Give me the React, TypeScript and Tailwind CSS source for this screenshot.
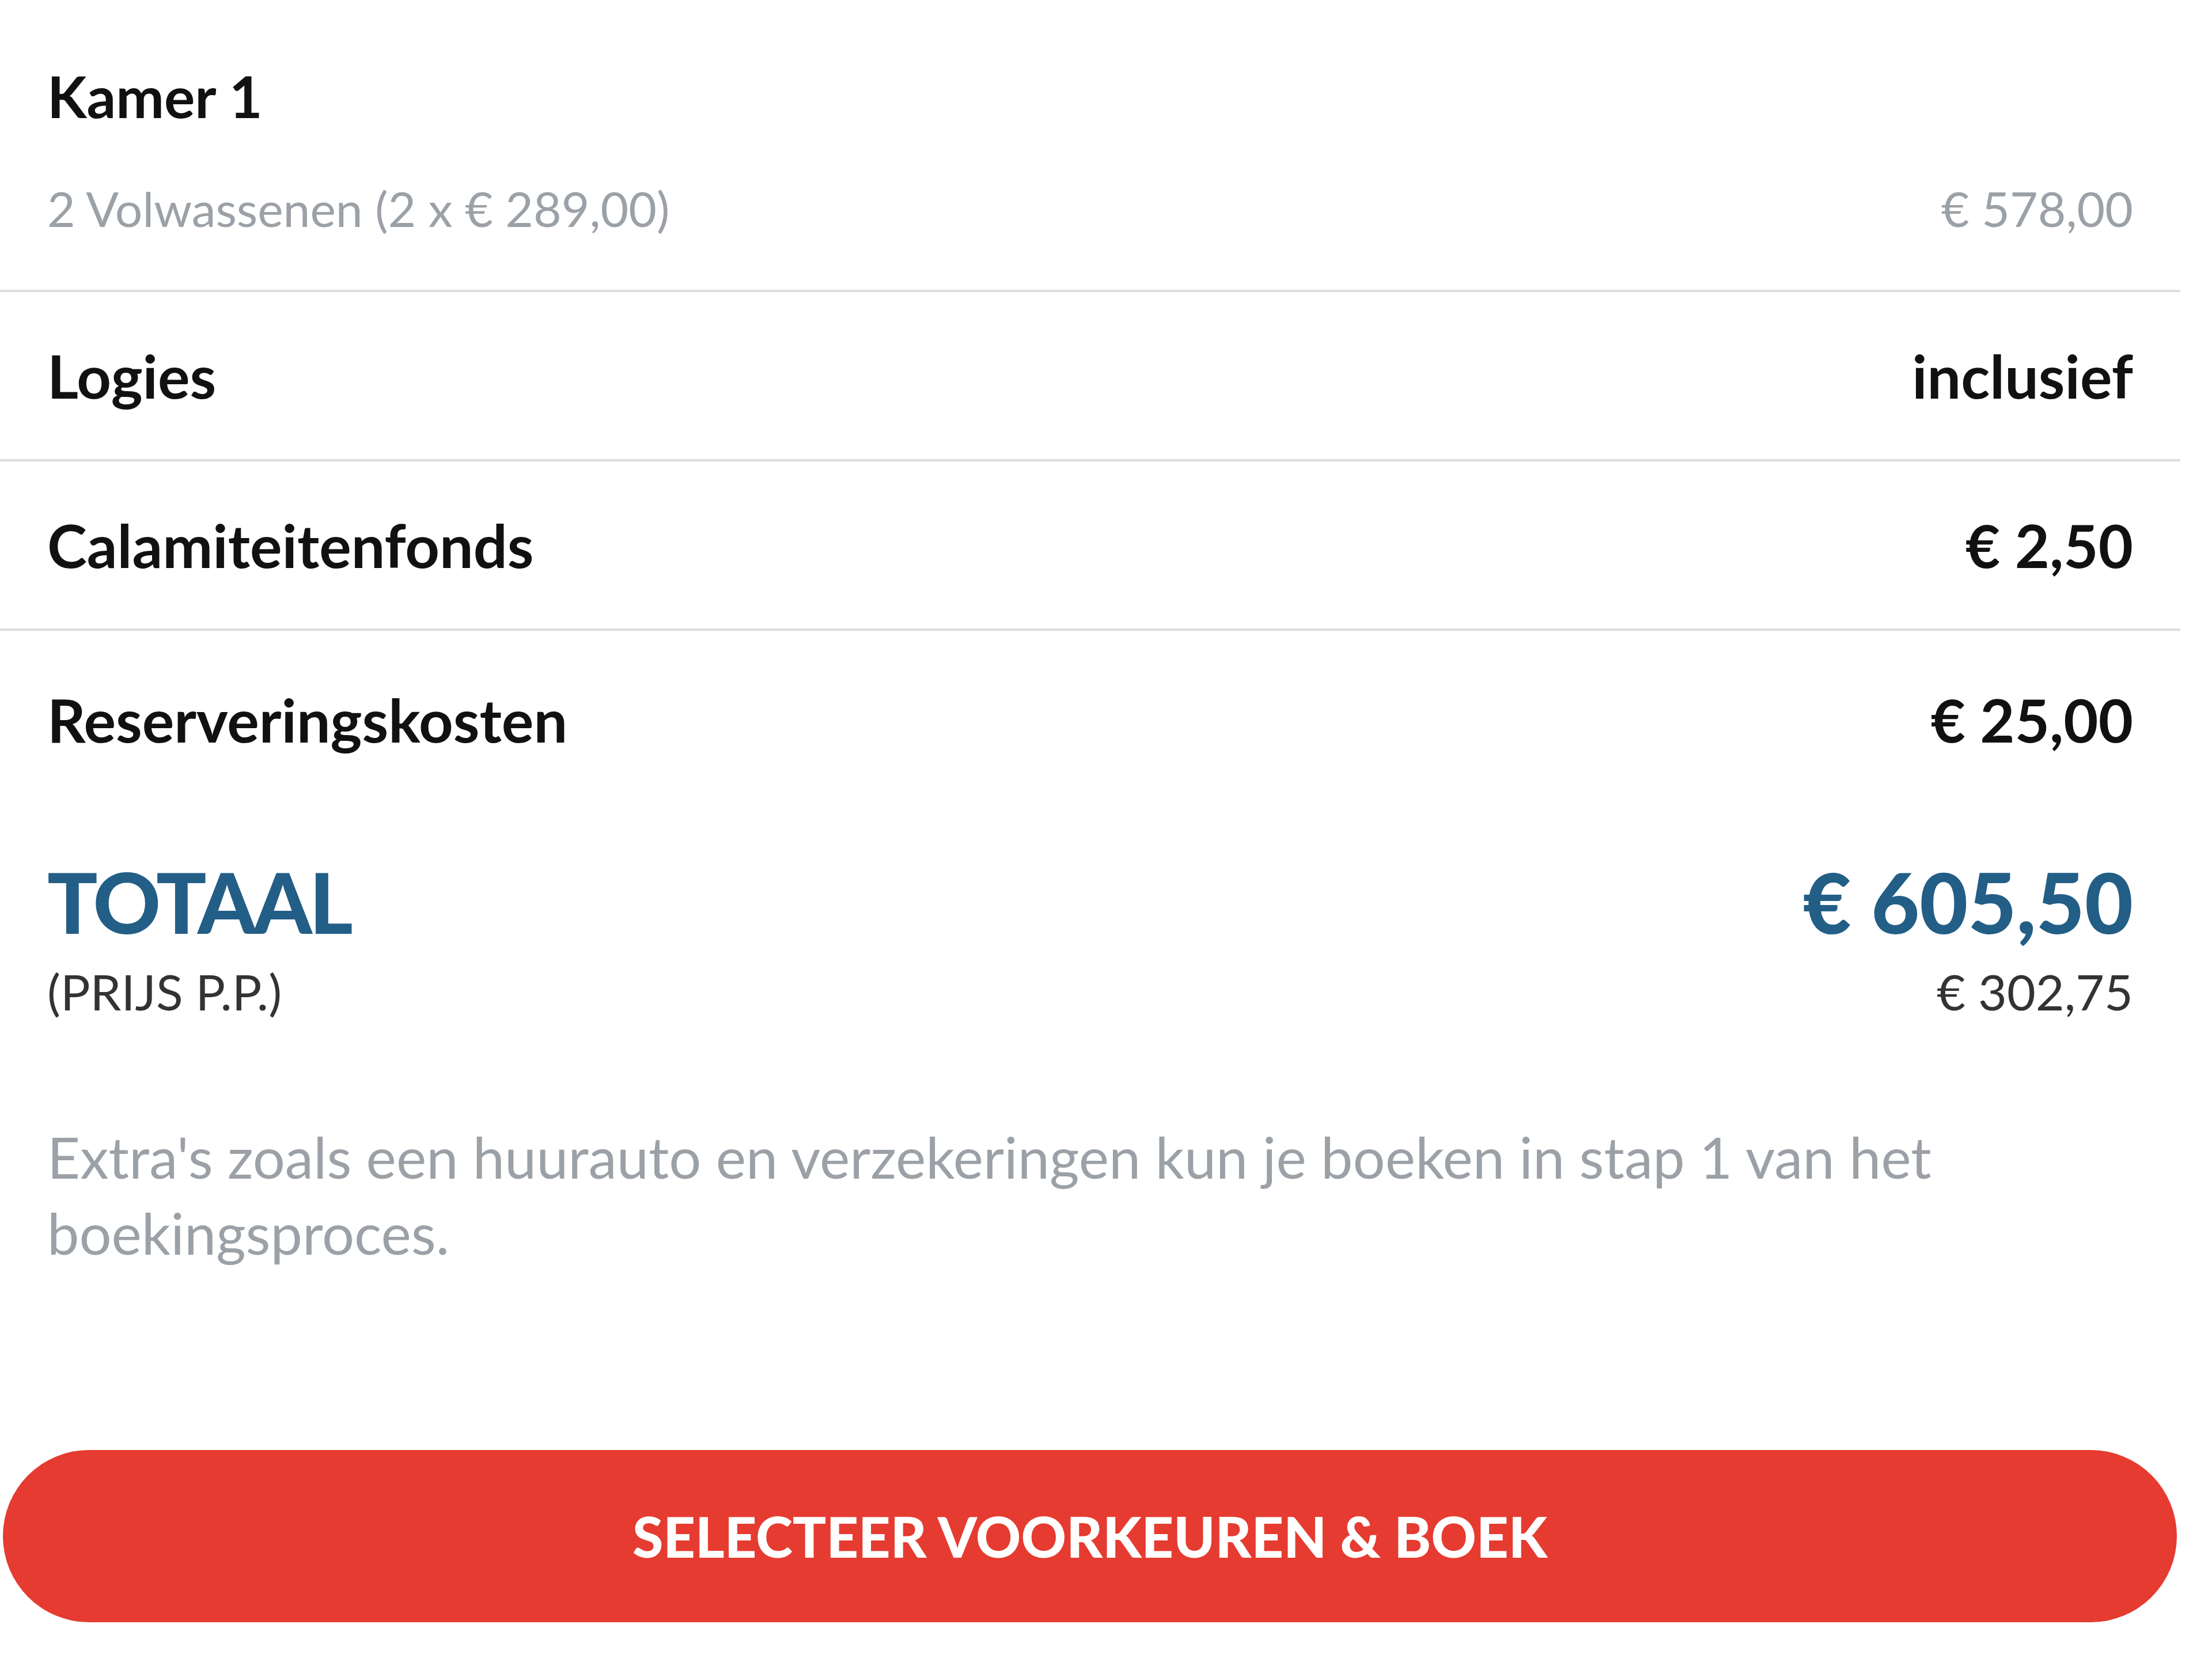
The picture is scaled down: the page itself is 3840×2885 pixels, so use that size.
const rows = [
  { label: 'Logies', value: 'inclusief' },
  { label: 'Calamiteitenfonds', value: '€ 2,50' },
];

export default function App() {
  return (
    <div className="min-h-[2885px] w-[3840px] bg-white font-['Lato','Liberation_Sans',sans-serif] text-[#111]">
      <div className="w-[3785px]">
        {/* Kamer */}
        <div className="border-b-4 border-[#dcdcdc] px-[82px] pt-[106px] pb-[90px]">
          <div className="text-[100px] font-bold leading-[120px]">Kamer 1</div>
          <div className="mt-[84px] flex items-center justify-between text-[84px] leading-[103px] text-[#9ba1a7]">
            <span>2 Volwassenen (2 x € 289,00)</span>
            <span>€ 578,00</span>
          </div>
        </div>

        {rows.map((r) => (
          <div
            key={r.label}
            className="flex h-[294px] items-center justify-between border-b-4 border-[#dcdcdc] px-[82px] text-[104px] font-bold"
          >
            <span>{r.label}</span>
            <span>{r.value}</span>
          </div>
        ))}

        <div className="flex items-center justify-between px-[82px] pt-[94px] text-[104px] font-bold leading-[120px]">
          <span>Reserveringskosten</span>
          <span>€ 25,00</span>
        </div>

        {/* Totaal */}
        <div className="mt-[185px] px-[82px]">
          <div className="flex items-baseline justify-between text-[145px] font-black leading-[143px] text-[#235e86]">
            <span className="tracking-[-5px]">TOTAAL</span>
            <span>€ 605,50</span>
          </div>
          <div className="mt-[31px] flex items-baseline justify-between text-[86px] leading-[106px] text-[#333]">
            <span>(PRIJS P.P.)</span>
            <span>€ 302,75</span>
          </div>
        </div>

        <p className="mt-[168px] max-w-[3580px] px-[82px] text-[99px] leading-[132px] text-[#9ba1a7]">
          Extra's zoals een huurauto en verzekeringen kun je boeken in stap 1 van het boekingsproces.
        </p>

        <button className="mt-[311px] ml-[5px] flex h-[299px] w-[3774px] items-center justify-center rounded-full bg-[#e63b30] text-[97px] font-black text-white">
          SELECTEER VOORKEUREN &amp; BOEK
        </button>
      </div>
    </div>
  );
}
